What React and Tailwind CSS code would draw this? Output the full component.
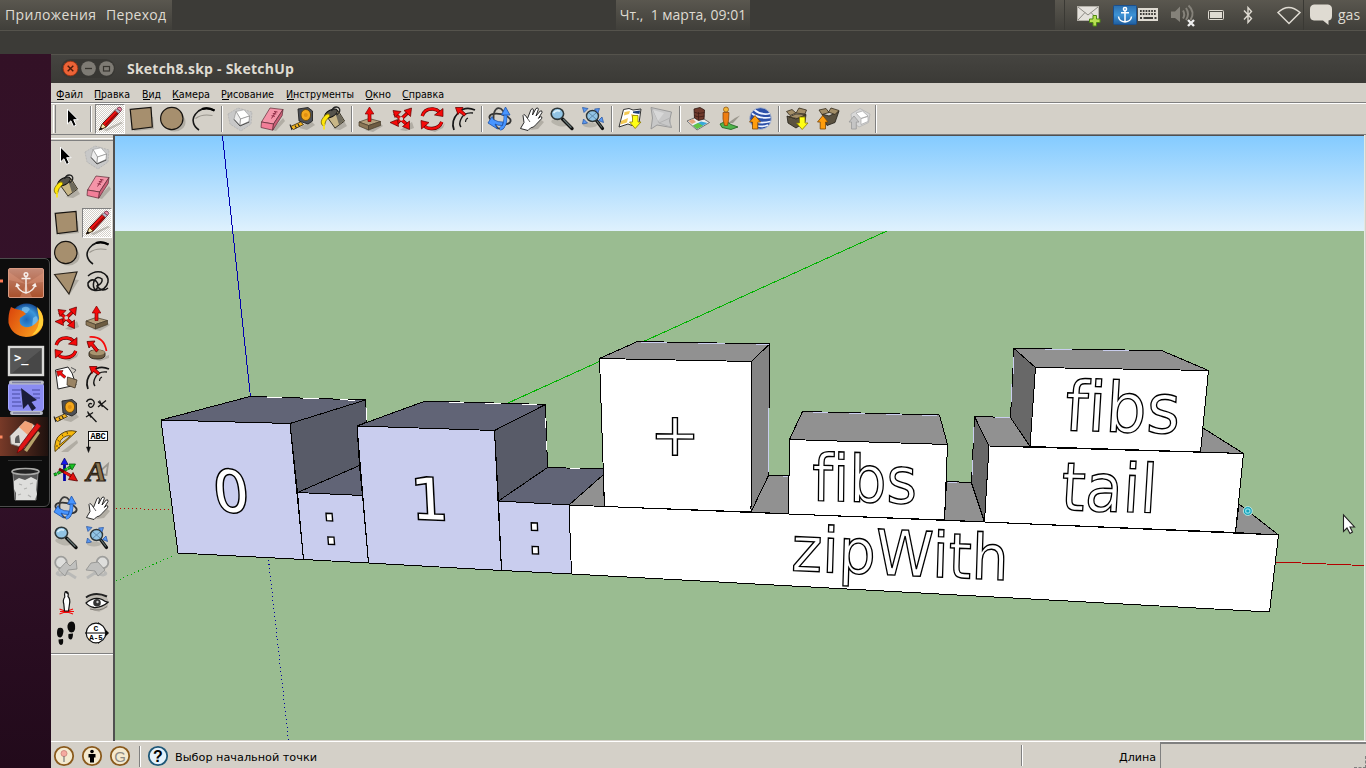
import React from "react";

const Shadow = ({ d }) => <path d={d} fill="#8d8980" opacity="0.5" />;

const ICONS = {
  select: (
    <path d="M9.5 5 V20 L12.900 16.800 L15.500 22.400 L18.200 21.200 L15.700 15.700 H20.100 Z" fill="#000" stroke="#fff" strokeWidth="1" />
  ),
  pencil: (
    <g>
      <Shadow d="M8 26 L26 18 L28 19 L12 27 Z" />
      <path d="M4.500 26 L7.500 19.500 L21 5.500 L24.500 8.500 L11 23 Z" fill="#ee1111" stroke="#3b0505" strokeWidth="0.9" />
      <path d="M10.500 21 L23 8" stroke="#9b0707" strokeWidth="1.500" />
      <path d="M4.500 26 L7.500 19.500 L11 23 Z" fill="#f4e3ae" stroke="#4a3b10" strokeWidth="0.8" />
      <path d="M4.300 26.300 L5.500 23 L8 25 Z" fill="#111" />
      <path d="M20 6.500 L22 4.500 L25.500 7.500 L23.500 9.500 Z" fill="#b7b7c8" stroke="#555" strokeWidth="0.6" />
      <path d="M22 4.500 Q24 2 26 3.700 Q27.500 5.500 25.500 7.500 Z" fill="#f08aa6" stroke="#6b2a3c" strokeWidth="0.8" />
    </g>
  ),
  rect: (
    <g>
      <Shadow d="M8 27 L28 25 L27 13 L10 13 Z" />
      <path d="M4.200 5.300 L25 3.500 L26.300 23 L6.200 25.500 Z" fill="#a68f6e" stroke="#161310" strokeWidth="1.2" />
    </g>
  ),
  circle: (
    <g>
      <ellipse cx="17.500" cy="18" rx="11" ry="9.500" fill="#8d8980" opacity="0.5" />
      <circle cx="14.800" cy="14.500" r="11.200" fill="#a68f6e" stroke="#161310" strokeWidth="1.2" />
    </g>
  ),
  polygon: (
    <g>
      <Shadow d="M10 10 L28 12 L19 26 Z" />
      <path d="M3.600 6.500 L26 4 L18 26 Z" fill="#a68f6e" stroke="#2a241c" strokeWidth="1.2" />
    </g>
  ),
  arc: (
    <g fill="none">
      <path d="M7.500 14.500 Q14 9.500 24.500 11.500" stroke="#9a968e" strokeWidth="1.1" />
      <path d="M26.500 6.500 Q18 1.500 10.500 7 Q3.500 13 5.500 19 Q6.500 23 11 26" stroke="#161616" strokeWidth="1.600" />
      <path d="M26.500 6.500 Q20 3 14 5" stroke="#000" strokeWidth="2.200" />
    </g>
  ),
  freehand: (
    <path d="M6 8 Q12 2.500 19 4 Q27 7 26 14 Q24 23 13 22.500 Q5 21 6 15 Q9 10 14 13 Q18 17 14 22 Q10 20 12 13 Q15 7 20 11 Q21 15 15 18 Q20 25 26 20" fill="none" stroke="#161616" strokeWidth="1.500" />
  ),
  component: (
    <g>
      <path d="M3 10 L13 4 L27 8 L26 20 L16 27 L5 20 Z" fill="#c8c8c8" stroke="#adadad" strokeWidth="0.7" strokeDasharray="2 1" />
      <path d="M11 7.500 L19 5.800 L24.500 12 L15.500 15 Z" fill="#fff" stroke="#999" strokeWidth="0.6" />
      <path d="M11 7.500 L15.500 15 L15 21.500 L9 15 Z" fill="#ededed" stroke="#888" strokeWidth="0.6" />
      <path d="M15.500 15 L24.500 12 L24 17.500 L15 21.500 Z" fill="#fdfdfd" stroke="#777" strokeWidth="0.6" />
      <path d="M9 15.500 L15 22 L24.300 18" stroke="#444" strokeWidth="0.9" fill="none" />
    </g>
  ),
  eraser: (
    <g>
      <Shadow d="M16 26 L27 14 L29 17 L20 27 Z" />
      <path d="M14 4 L27 5.500 L17.500 20 L5.500 18 Z" fill="#f594a8" stroke="#5c2935" strokeWidth="0.7" />
      <path d="M5.500 18 L17.500 20 L16.700 26.200 L5 23.500 Z" fill="#f27e98" stroke="#5c2935" strokeWidth="0.7" />
      <path d="M27 5.500 L26.200 11.500 L16.700 26.200 L17.500 20 Z" fill="#cc6078" stroke="#5c2935" strokeWidth="0.7" />
      <path d="M18 7.500 L21.500 8 M16.800 9.500 L20.300 10 M15.500 11.700 L19 12.300 M19.800 7.800 L15.500 14.500" stroke="#8f2d46" strokeWidth="1" />
    </g>
  ),
  tape: (
    <g>
      <Shadow d="M12 24 L24 17 L28 21 L20 26 Z" />
      <path d="M11 5 L21 3.500 L25.500 7 L25.500 17 L21 20 L12 17 Z" fill="#4c4f55" stroke="#222" strokeWidth="0.9" />
      <ellipse cx="18.800" cy="11" rx="4.800" ry="5.500" fill="#f4a81d" stroke="#5c4008" strokeWidth="0.8" />
      <circle cx="18.800" cy="11" r="2" fill="#e08f12" />
      <path d="M13.500 18 L16.500 20.500 L6.500 25.500 L3.500 22.500 Z" fill="#f6b51e" stroke="#33260a" strokeWidth="0.8" />
      <path d="M3 20.500 L5 26 M8 21.500 L9.500 24 M11 20 L12.500 22.500" stroke="#222" strokeWidth="1.1" />
    </g>
  ),
  bucket: (
    <g>
      <Shadow d="M15 25 L26 17 L29 22 L22 26 Z" />
      <path d="M7 10 L20 6.500 L26.500 17 L17 24 Z" fill="#c8b687" stroke="#26231a" strokeWidth="0.9" />
      <path d="M17 8 L22.500 11 L25.800 17 L21 20.500 Z" fill="#6e6a5c" />
      <ellipse cx="13" cy="9.500" rx="7" ry="3.400" fill="#55534c" stroke="#111" strokeWidth="0.9" transform="rotate(-28 13 9.500)" />
      <path d="M13.500 7 Q16 1.500 20.500 3.500 Q24 7 18.500 11" fill="none" stroke="#222" strokeWidth="1.3" />
      <path d="M8 10.500 Q2 16 3.500 20 Q4.500 22.500 6.500 21.500 Q6.500 17 12 12 Q11 8.500 8 10.500 Z" fill="#ffe60a" stroke="#766400" strokeWidth="0.8" />
      <path d="M6 20 V25.500" stroke="#ffe60a" strokeWidth="1.600" />
    </g>
  ),
  pushpull: (
    <g>
      <Shadow d="M10 26 L26 20 L28 22 L18 28 Z" />
      <path d="M4 18 L14 14.500 L25.500 17.500 L13.500 21.500 Z" fill="#b4a07c" stroke="#453b2a" strokeWidth="0.7" />
      <path d="M4 18 L13.500 21.500 L13.500 26 L4 22 Z" fill="#8c7757" stroke="#453b2a" strokeWidth="0.7" />
      <path d="M13.500 21.500 L25.500 17.500 L25.500 21.500 L13.500 26 Z" fill="#6d5c42" stroke="#453b2a" strokeWidth="0.7" />
      <path d="M14.500 3 L18.800 10 H16 V17.500 H13 V10 H10.200 Z" fill="#f50a0a" stroke="#7c0000" strokeWidth="0.7" />
    </g>
  ),
  move: (
    <g>
      <Shadow d="M14 26 L26 18 L28 24 L20 27 Z" />
      <path d="M8.500 9.500 L21.500 21 M22 8.500 L9.500 20.500" stroke="#5a0000" strokeWidth="3.600" />
      <path d="M8.500 9.500 L21.500 21 M22 8.500 L9.500 20.500" stroke="#f50a0a" strokeWidth="2.400" />
      <circle cx="15.300" cy="14.800" r="1.900" fill="#d4d0c8" />
      <path d="M7 6.500 L15 7.500 L9 13.500 Z M25.500 4 L24.500 12.500 L18 6.500 Z M23.500 25.500 L16.500 22.500 L23.500 17 Z M4 18.500 L11.500 15.500 L12.500 22.500 Z" fill="#f50a0a" stroke="#5a0000" strokeWidth="0.7" />
    </g>
  ),
  rotate: (
    <g fill="none">
      <Shadow d="M12 26 Q24 25 28 19 L26 24 L18 28 Z" />
      <path d="M5.200 12 Q7.500 4.500 16 5 Q20 5.300 22.500 8" stroke="#5a0000" strokeWidth="3.400" />
      <path d="M5.200 12 Q7.500 4.500 16 5 Q20 5.300 22.500 8" stroke="#f50a0a" strokeWidth="2.300" />
      <path d="M24.800 18 Q22 25 14 24.500 Q9.500 24.500 7.500 22" stroke="#5a0000" strokeWidth="3.400" />
      <path d="M24.800 18 Q22 25 14 24.500 Q9.500 24.500 7.500 22" stroke="#f50a0a" strokeWidth="2.300" />
      <path d="M26 4.500 L26 12.500 L17.500 11 Z M4.500 25 L4 16.500 L12 18.500 Z" fill="#f50a0a" stroke="#5a0000" strokeWidth="0.7" />
    </g>
  ),
  offset: (
    <g fill="none" stroke="#161616">
      <path d="M27 6 Q17 1.500 10 9 Q2.500 17 6 26" strokeWidth="1.700" />
      <path d="M25 9 Q16 8 13 15 Q10.500 20 13 23" strokeWidth="1.400" />
      <path d="M20 14 Q17.500 15 17.500 18" strokeWidth="1.100" />
      <path d="M7.500 3.500 L15 3.500 L13.500 6 L18 10 L16.300 12 L11.500 8.500 L10 10.500 Z" fill="#f50a0a" stroke="#6a0000" strokeWidth="0.8" />
    </g>
  ),
  followme: (
    <g>
      <Shadow d="M14 27 L27 22 L27 25 L18 28 Z" />
      <path d="M7 20 Q7 17 15 17 Q22.500 17 23 20 V22.500 Q22 26 15 26 Q8 26 7 22.500 Z" fill="#6d5c42" stroke="#2b2418" strokeWidth="0.9" />
      <ellipse cx="15.300" cy="19.500" rx="7.500" ry="2.800" fill="#a8946f" />
      <path d="M7.500 4 Q22 3 24.500 18" fill="none" stroke="#f50a0a" strokeWidth="1.700" />
      <path d="M5 8.500 L13 8 L11.300 10.500 L16.500 17 L14.300 19 L9 12.500 L7 15 Z" fill="#f50a0a" stroke="#5a0000" strokeWidth="0.8" />
    </g>
  ),
  scale: (
    <g>
      <path d="M4.500 7 L17 4 L21 10 L25 22 L7 26 Z" fill="#fff" stroke="#222" strokeWidth="1" />
      <path d="M16.500 14 L26 17 L24 25 L16 22 Z" fill="#9a8464" stroke="#3d3424" strokeWidth="0.8" />
      <path d="M5.500 8 L12 7.500 L10.800 10 L15 13.500 L13.200 15.300 L9 11.700 L7 13.500 Z" fill="#f50a0a" stroke="#5a0000" strokeWidth="0.6" />
      <path d="M20 4.500 L25 7 L22.500 10" fill="none" stroke="#555" strokeWidth="1" />
    </g>
  ),
  dimension: (
    <g fill="none" stroke="#161616" strokeWidth="1.300">
      <path d="M6 17 L14.500 26 M16 5.500 L26 14" />
      <path d="M4 21 L11 16.500 M5.500 15.500 L9 21.500 M16 11 L24 4.500 M17.500 4.500 L20.500 11" />
      <path d="M4.500 6 Q6 2.500 10 3.500 Q14 6 11 10 Q8 13 6.500 9.500 Q7 6.500 10 8" />
    </g>
  ),
  protractor: (
    <g>
      <Shadow d="M10 26 L26 14 L27 17 L17 26 Z" />
      <path d="M4 25.500 Q2.500 13 10 8 Q17 3 25.500 5.500 Z" fill="#f7b80c" stroke="#4a3608" strokeWidth="0.9" />
      <path d="M8.500 19 Q8.500 14 12.500 11.500 Q16 9 19.500 9.800 Z" fill="#d4d0c8" stroke="#4a3608" strokeWidth="0.8" />
      <path d="M5 20 H7 M6.500 14 L8.500 15.500 M11 8.500 L12 10.500 M16 6 L16.500 8 M7.500 21 L8.500 22.500" stroke="#4a3608" strokeWidth="0.8" />
    </g>
  ),
  label: (
    <g>
      <path d="M6.500 6 V25" stroke="#111" strokeWidth="1" />
      <path d="M4.500 21 H8.500 L6.500 26.500 Z" fill="#111" stroke="#111" strokeWidth="0.5" />
      <rect x="6.500" y="5.500" width="19" height="9" fill="#fff" stroke="#111" />
      <text x="16" y="13" fontSize="8.500" fontWeight="700" fontFamily="Liberation Mono, monospace" textAnchor="middle" textLength="15" fill="#000">ABC</text>
    </g>
  ),
  axes: (
    <g>
      <path d="M13.500 25 V9" stroke="#0000a8" strokeWidth="2.800" />
      <path d="M13.500 2 L17 8.500 H10 Z" fill="#1616ee" stroke="#00005c" strokeWidth="0.7" />
      <path d="M3 19 L20 11" stroke="#0a5c10" strokeWidth="3.200" strokeDasharray="3 0.8" />
      <path d="M3.500 18.800 L20 11" stroke="#18c322" strokeWidth="1.800" strokeDasharray="3 0.8" />
      <path d="M18 8 L24.500 8 L21 14 Z" fill="#18c322" stroke="#0a5c10" strokeWidth="0.8" />
      <path d="M8 13 L21 20.500" stroke="#6e0000" strokeWidth="3" />
      <path d="M13 16 L21 20.500" stroke="#e51111" strokeWidth="2.400" />
      <path d="M22 16.500 L26.500 25 L17.500 23.500 Z" fill="#e51111" stroke="#5c0000" strokeWidth="0.8" />
    </g>
  ),
  text3d: (
    <g>
      <path d="M16 17 L26 8 L24.500 19 L17 18" fill="none" stroke="#9b978f" strokeWidth="1.800" />
      <text x="13.500" y="25" fontSize="28" fontWeight="700" fontFamily="Liberation Serif, serif" textAnchor="middle" fill="#8d7752" stroke="#2c2214" strokeWidth="1.200" textLength="21" lengthAdjust="spacingAndGlyphs" transform="translate(3 0) skewX(-8)">A</text>
    </g>
  ),
  orbit: (
    <g fill="none">
      <ellipse cx="15" cy="15" rx="10.800" ry="5" stroke="#333" strokeWidth="1.800" transform="rotate(12 15 15)" />
      <ellipse cx="14.500" cy="14.500" rx="6" ry="10.500" stroke="#3c3c3c" strokeWidth="1.800" transform="rotate(-6 14.500 14.500)" />
      <path d="M15 25 Q21 23 20.500 10.500" stroke="#1c50a8" strokeWidth="3.600" />
      <path d="M15 25 Q21 23 20.500 10.500" stroke="#4895ff" strokeWidth="2.600" />
      <path d="M20.500 3 L25 11 L16.500 11 Z" fill="#4895ff" stroke="#1c50a8" strokeWidth="0.8" />
      <path d="M3 19 L7 12.500 L8.500 15.500 Q13 18.500 18 18 L17.500 21.500 Q12 21.500 10 20 L12.500 25 Z" fill="#4895ff" stroke="#1c50a8" strokeWidth="0.8" />
    </g>
  ),
  hand: (
    <g>
      <Shadow d="M14 26 L25 16 L28 18 L22 25 Z" />
      <path d="M4.500 24.500 L8 18.500 L7 11.500 Q7.500 9.500 9.500 11.500 L11.500 14.500 L15 5.500 Q17 3.500 17.500 6 L16.500 11 L20 4.500 Q22.200 3 22.400 5.200 L20 12 L24.200 7 Q26.300 6 26 8.500 L22.400 14.400 L24.500 12.700 Q26.800 12.400 25.500 14.800 L20 20.500 Q18 23.500 14.500 24 L12 26.500 Z" fill="#fff" stroke="#161616" strokeWidth="0.9" />
      <path d="M11.500 14.500 L14 18" stroke="#161616" strokeWidth="0.7" />
    </g>
  ),
  zoom: (
    <g>
      <ellipse cx="12" cy="19" rx="8" ry="3" fill="#8d8980" opacity="0.4" transform="rotate(15 12 19)" />
      <path d="M15.500 15 L25 24.500" stroke="#111" strokeWidth="3.400" strokeLinecap="round" />
      <path d="M16.500 15.500 L24 23.300" stroke="#607070" strokeWidth="1.300" strokeLinecap="round" />
      <ellipse cx="10.400" cy="9.800" rx="6.200" ry="5.600" fill="#92c4e4" stroke="#2d3638" strokeWidth="1.600" />
      <path d="M6.500 9 Q9 5.500 13 7.200" stroke="#d9effa" strokeWidth="1.800" fill="none" />
    </g>
  ),
  zoomext: (
    <g>
      <ellipse cx="12" cy="21" rx="7" ry="2.500" fill="#8d8980" opacity="0.4" />
      <path d="M18.500 16.500 L24.500 24.500" stroke="#111" strokeWidth="3.200" strokeLinecap="round" />
      <path d="M19 17 L24 23.500" stroke="#607070" strokeWidth="1.200" />
      <ellipse cx="14.500" cy="12" rx="6" ry="5.500" fill="#92c4e4" stroke="#2d3638" strokeWidth="1.400" />
      <path d="M11 9 L18 15 M18 9 L11 15" stroke="#5c87a8" strokeWidth="0.9" />
      <path d="M4.500 3.500 L10 4.500 L6 8.500 Z M21.500 4.500 L20 9 L16.500 5 Z M4.500 20 L5.500 15 L9.500 19 Z M25.500 18.500 L20.500 16.500 L24 13 Z" fill="#5a98f2" stroke="#214f9c" strokeWidth="0.7" />
    </g>
  ),
  zoomprev: (
    <g>
      <path d="M14 18 L25 25 M8 19 Q4 21 9 22 L18 20" stroke="#b9b9b7" strokeWidth="3" fill="none" />
      <circle cx="10" cy="9.500" r="5.800" fill="#dededc" stroke="#9d9d9b" strokeWidth="1.800" />
      <path d="M7.500 17 L15 9 L19 13 L25 7 L26 16 L17 17 L14 23 Z" fill="#c0c0be" stroke="#949492" strokeWidth="0.9" />
    </g>
  ),
  zoomnext: (
    <g transform="matrix(-1 0 0 1 30 0)">
      <path d="M14 18 L25 25 M8 19 Q4 21 9 22 L18 20" stroke="#b9b9b7" strokeWidth="3" fill="none" />
      <circle cx="9.500" cy="9.500" r="5.800" fill="#dededc" stroke="#9d9d9b" strokeWidth="1.800" />
      <path d="M7 17 L14 9 L21 10 L26 17 L17 18 L14 23 Z" fill="#c0c0be" stroke="#949492" strokeWidth="0.9" />
    </g>
  ),
  camera: (
    <g>
      <path d="M8.500 21 L22 26 M22 21 L8.500 26 M9 23.500 H23" stroke="#f50a0a" strokeWidth="1.200" />
      <path d="M13.800 9 Q13 4 15.300 3.500 Q18 4 17 8.500 Q19.500 11 18.500 16 L17.500 23 H13.500 L12.800 16 Q11.500 12 13.800 9 Z" fill="#fff" stroke="#111" strokeWidth="1.200" />
      <path d="M13.500 3.500 Q16.500 2 17.500 6.500 L15.500 5.500 Z" fill="#111" />
    </g>
  ),
  eye: (
    <g fill="none">
      <path d="M3.500 13 Q9 4 20 6 L26 11 L26 19 L17 24 L8 21 Z" fill="#a5a199" opacity="0.5" />
      <path d="M4 9.500 Q13 3 25 8.500" stroke="#222" strokeWidth="2" />
      <path d="M4 15 Q12 8 20 11.500 Q24 14.500 26.500 14 Q19 20 12 19.500 Q6 18 4 15 Z" fill="#fff" stroke="#111" strokeWidth="1.300" />
      <circle cx="15" cy="14.800" r="3.800" fill="#333" />
      <circle cx="15.500" cy="14" r="1.200" fill="#ccc" />
      <path d="M8 21 Q18 24 25 18.500" stroke="#76726b" strokeWidth="0.9" />
    </g>
  ),
  feet: (
    <g fill="#0b0b0b">
      <path d="M7.500 10 Q12 8.500 12.500 13 Q12 18.500 9.500 19.500 Q6 19.500 6 15 Q6 11 7.500 10 Z M7.500 21.500 L12 21 Q13 26.500 10 27 Q7.500 26.500 7.500 21.500 Z" />
      <path d="M18 4.500 Q22 2 23.800 6 Q25 11 22.500 14 Q18.500 15.500 17 11.500 Q15.500 7 18 4.500 Z M17.500 16 L22 15.500 Q22 21.500 19.500 21.500 Q16.500 21 17.500 16 Z" />
    </g>
  ),
  section: (
    <g>
      <path d="M16 4 L27 15 L16 26 Z" fill="#000" />
      <circle cx="14" cy="15" r="9.800" fill="#fff" stroke="#111" strokeWidth="1.200" />
      <path d="M3 15 H26" stroke="#111" strokeWidth="1.100" />
      <text x="14" y="13" fontSize="8" fontWeight="700" fontFamily="Liberation Mono, monospace" textAnchor="middle">C</text>
      <text x="14" y="21.500" fontSize="7.500" fontWeight="700" fontFamily="Liberation Mono, monospace" textAnchor="middle">A-5</text>
    </g>
  ),
  mapdown: (
    <g>
      <path d="M8.500 5.500 L14 4.500 L18 6 L26 5 L24 19 L17 21.500 L13 20 L4 23 Z" fill="#fff" stroke="#333" strokeWidth="1" />
      <path d="M9.500 8 L15 7 L14 10 L9 11.500 Z M6 17 L13 14 L12 18.500 L5.500 20.500 Z M16 10 L20 11 L17 14 Z" fill="#f3c955" />
      <path d="M18 7.500 L25 6.500 L24.500 10 L18 9 Z" fill="#1c3c78" />
      <path d="M17.500 11.500 H23 V18 H26 L20.200 24.500 L14.500 18 H17.500 Z" fill="#ffff14" stroke="#8a7a00" strokeWidth="0.8" />
    </g>
  ),
  terrain: (
    <g>
      <path d="M5 3.500 L25.500 8 L23.500 17 L25.500 23.500 L11 21 L5 25 L6.500 14 Z" fill="#c8c8c8" stroke="#949494" strokeWidth="0.9" />
      <path d="M6 4 L13 19 L24 14 L24.500 23 L13 19" fill="none" stroke="#b0b0b0" strokeWidth="0.9" />
      <path d="M7 6 L18 9 L12 17 Z" fill="#d8d8d8" />
    </g>
  ),
  photo: (
    <g>
      <path d="M4 17 L16 12 L26.500 18.500 L14 26 Z" fill="#eee" stroke="#555" strokeWidth="0.8" />
      <path d="M10 21.500 L18 17.500 L24.500 19 L14 25 Z" fill="#38a8d8" />
      <path d="M10 21.500 L15 19 L20 21.800 L14 25 Z" fill="#63c342" />
      <path d="M5.500 17 L10 15 L13 18 L9 20 Z" fill="#e5a378" />
      <path d="M11 5 L17 3.500 L21.500 6 L21 15 L15.500 16.500 L11.500 14 Z" fill="#703a2c" stroke="#2c1510" strokeWidth="0.8" />
      <path d="M15.500 8 V16 M11 8 L15.500 9.500 L21.500 8.500 M11 11.500 L15.500 13 L21.500 12" stroke="#3f1d15" strokeWidth="0.8" fill="none" />
    </g>
  ),
  pegman: (
    <g>
      <path d="M14 19 L21 14 L26 11.500 L19 19 Z" fill="#8d8980" opacity="0.8" />
      <path d="M6 20 L12 17 L17 20.500 L24 23 L17 25.500 L8 23.500 Z" fill="#50b44c" stroke="#1b5f1b" strokeWidth="0.8" />
      <circle cx="12" cy="5.500" r="2.500" fill="#f2b63a" stroke="#8b4c06" strokeWidth="0.7" />
      <path d="M9 8.500 H15 L14.500 16.500 L13.500 21.500 H10.500 L9 15 Z" fill="#ee7d12" stroke="#823e02" strokeWidth="0.7" />
    </g>
  ),
  globe: (
    <g fill="none">
      <circle cx="15.500" cy="14.500" r="10.800" fill="#2c50a8" stroke="#aeb8cc" strokeWidth="0.9" />
      <path d="M7 9.500 Q14 15 25.500 13.500 M9.500 6 Q16 11.500 25 9.500 M10 18 Q18 19.500 25.500 17.500 M13 22 Q18 23 23 21" stroke="#eef4ff" strokeWidth="1.700" />
      <path d="M10 11.500 L15.500 18 H12.800 V25 H7.500 V18 H4.500 Z" fill="#ff9d0c" stroke="#7c4500" strokeWidth="0.8" />
    </g>
  ),
  boxdown: (
    <g>
      <path d="M5 12 L14 15 L24 10.500 L23 18 L14 24 L6 19 Z" fill="#5b5240" stroke="#221e16" strokeWidth="0.8" />
      <path d="M4.500 7.500 L10 5.500 L14 9 L8 11.500 Z M14 9 L17 4 L24.500 6 L23 10 Z M7 13 L14 10 L24 10.500 L15 14.500 Z" fill="#a38e68" stroke="#342b1c" strokeWidth="0.8" />
      <path d="M17.500 13 H23 V19 H26 L20.200 25.500 L14.500 19 H17.500 Z" fill="#ffff14" stroke="#8a7a00" strokeWidth="0.8" />
    </g>
  ),
  boxup: (
    <g>
      <path d="M9 10 L16 12 L26 7 L22 18.500 L14 21.500 Z" fill="#5b5240" stroke="#221e16" strokeWidth="0.8" />
      <path d="M6 6 L13 4.500 L16 8.500 L9 10.500 Z M15.500 8 L18 4 L26 6.500 L22 10.500 Z" fill="#a38e68" stroke="#342b1c" strokeWidth="0.8" />
      <path d="M9.800 11.500 L15 18 H12.500 V25 H7.200 V18 H4.500 Z" fill="#ff9d0c" stroke="#7c4500" strokeWidth="0.8" />
    </g>
  ),
  houseup: (
    <g>
      <path d="M7 10 L16 4.500 L26 10 L24.500 18.500 L15 23 L8 18 Z" fill="#d8d8d8" stroke="#b4b4b4" strokeWidth="0.8" />
      <path d="M12 9 L18.500 7 L24 12 L17 14.500 Z M17 14.500 L24 12.500 V17.500 L17 20.500 Z" fill="#fff" stroke="#a4a4a4" strokeWidth="0.7" />
      <path d="M10 12 L15 18 H12.300 V25 H7.500 V18 H5 Z" fill="#c5c5c5" stroke="#999" strokeWidth="0.8" />
    </g>
  ),
};

const PRESSED = "bg-[repeating-conic-gradient(#ffffff_0_25%,#d4d0c8_0_50%)] bg-[length:2px_2px] border border-t-[#808080] border-l-[#808080] border-r-white border-b-white";

const Icon = ({ name }) => (
  <svg viewBox="0 0 30 30" className="block h-[30px] w-[30px] shrink-0">
    {ICONS[name]}
  </svg>
);

const Tool = ({ name, active }) => (
  <div className={"flex h-[30px] w-[30px] shrink-0 items-center justify-center overflow-hidden " + (active ? PRESSED : "")}>
    <Icon name={name} />
  </div>
);

const Sep = ({ wide }) => (
  <div className={"flex h-[26px] shrink-0 justify-center " + (wide ? "w-2" : "w-1.5")}>
    <div className="w-0.5 border-l border-l-[#808080] border-r border-r-white" />
  </div>
);

const GROUPS = [
  ["pencil", "rect", "circle", "arc"],
  ["component", "eraser", "tape", "bucket"],
  ["pushpull", "move", "rotate", "offset"],
  ["orbit", "hand", "zoom", "zoomext"],
  ["mapdown", "terrain"],
  ["photo", "pegman", "globe"],
  ["boxdown", "boxup", "houseup"],
];

const PALETTE = [
  { cls: "mb-1.5", items: ["select", "component", "bucket", "eraser"] },
  { cls: "mb-[5px]", items: ["rect", "pencil", "circle", "arc", "polygon", "freehand"] },
  { cls: "mb-[3px]", items: ["move", "pushpull", "rotate", "followme", "scale", "offset"] },
  { cls: "mb-[7px]", items: ["tape", "dimension", "protractor", "label", "axes", "text3d"] },
  { cls: "mb-[5px]", items: ["orbit", "hand", "zoom", "zoomext", "zoomprev", "zoomnext"] },
  { cls: "mb-[5px]", items: ["camera", "eye", "feet", "section"] },
];

const MENU = [
  { t: "Файл", w: "w-[38px]", len: 27 },
  { t: "Правка", w: "w-12", len: 36 },
  { t: "Вид", w: "w-[30px]", len: 19 },
  { t: "Камера", w: "w-[49px]", len: 38 },
  { t: "Рисование", w: "w-[65px]", len: 53 },
  { t: "Инструменты", w: "w-[79px]", len: 68 },
  { t: "Окно", w: "w-[37px]", len: 26 },
  { t: "Справка", w: "w-12", len: 42 },
];

const TopPanel = () => (
  <div className="flex h-[31px] shrink-0 border-b border-[#55534c] bg-[#3c3b37] font-['Open_Sans','Noto_Sans',sans-serif] text-[14px] leading-[30px] text-[#dfdbd2]">
    <div className="flex w-[172px] bg-linear-to-b from-[#5a574f] to-[#403f3a] pl-[5px]">
      <span className="w-[101px] tracking-[0.35px] whitespace-nowrap">Приложения</span>
      <span className="tracking-[0.3px]">Переход</span>
    </div>
    <div className="w-[444px]" />
    <div className="w-[134px] bg-linear-to-b from-[#5a574f] to-[#403f3a] text-center whitespace-pre">Чт.,  1 марта, 09:01</div>
    <div className="flex-1" />
    <div className="flex w-[311px] items-center bg-linear-to-b from-[#5a574f] to-[#403f3a]">
      <svg viewBox="1055 0 283 30" className="block h-[30px] w-[283px] shrink-0">
        <path d="M1064.5 0 V30 M1303.5 0 V30" stroke="#3a3934" />
        <rect x="1077.5" y="6.500" width="21" height="14" fill="#e4e1dc" stroke="#b3b0a8" />
        <path d="M1078 7 L1088 15 L1098 7 M1078 20 L1085 12.500 M1098 20 L1091 12.500" fill="none" stroke="#8c8983" />
        <path d="M1093 15.500 H1096.500 V19 H1100 V22.500 H1096.500 V26 H1093 V22.500 H1089.500 V19 H1093 Z" fill="#b8e052" stroke="#4e8a12" />
        <defs>
          <linearGradient id="anc" x1="0" y1="0" x2="0" y2="1"><stop offset="0" stopColor="#2c6fae" /><stop offset="0.5" stopColor="#3d93d6" /><stop offset="1" stopColor="#1f5d9e" /></linearGradient>
        </defs>
        <rect x="1113.5" y="5.500" width="23" height="19" rx="1" fill="url(#anc)" stroke="#1a4f8d" />
        <g fill="none" stroke="#fff" strokeWidth="1.500">
          <circle cx="1125" cy="9" r="1.600" />
          <path d="M1125 11 V22 M1121 12.800 H1129 M1118.500 16.500 Q1119 21.500 1125 22 Q1131 21.500 1131.500 16.500" />
        </g>
        <rect x="1138" y="8" width="20" height="13" fill="#dfdbd2" />
        <path d="M1140 11 H1156.500 M1140 14 H1156.500" stroke="#3c3b37" strokeWidth="2" strokeDasharray="1.700 1.100" />
        <path d="M1140 18 H1142 M1143.500 18 H1153 M1154.500 18 H1156.500" stroke="#3c3b37" strokeWidth="2" />
        <path d="M1171 11.500 H1175 L1180 6.500 V22 L1175 18 H1171 Z" fill="#85827a" />
        <path d="M1183 10.500 Q1185.500 14.500 1183 18.500 M1186 8 Q1190 14 1186 20 M1188.500 5.500 Q1195.500 12 1190.500 20" fill="none" stroke="#85827a" strokeWidth="2" />
        <path d="M1188 20 L1194 26 M1194 20 L1188 26" stroke="#eee" strokeWidth="2.400" />
        <rect x="1208.500" y="10.500" width="15" height="9" rx="1" fill="none" stroke="#dfdbd2" />
        <rect x="1210" y="12" width="12" height="6" fill="#dfdbd2" />
        <path d="M1244 10.500 L1251.500 18.500 L1248 22.500 V7.500 L1251.500 11.500 L1244 19.500" fill="none" stroke="#dfdbd2" strokeWidth="1.400" />
        <path d="M1278 12.500 Q1288.500 2.500 1300 12.500 L1289 23.500 Z" fill="none" stroke="#dfdbd2" strokeWidth="1.500" />
        <path d="M1314 4.500 H1328 Q1332 5 1332 9 V16 Q1332 20 1328.500 20.500 V25 L1323 20.500 H1314 Q1310 20 1310 16 V9 Q1310 5 1314 4.500 Z" fill="#dfdbd2" />
      </svg>
      <span>gas</span>
    </div>
  </div>
);

const Dock = () => (
  <div className="flex w-[51px] shrink-0 flex-col bg-linear-to-b from-[#331126] via-[#35122b] to-[#220a1b]">
    <div className="h-[204px]" />
    <svg viewBox="0 258 51 250" className="block h-[250px] w-[51px] shrink-0">
      <defs>
        <linearGradient id="tile" x1="0" y1="0" x2="0" y2="1"><stop offset="0" stopColor="#c48a77" /><stop offset="1" stopColor="#a9512c" /></linearGradient>
        <radialGradient id="fox"><stop offset="0" stopColor="#1c66b8" /><stop offset="0.6" stopColor="#3b98dc" /><stop offset="1" stopColor="#15488f" /></radialGradient>
        <linearGradient id="row" x1="0" x2="1"><stop offset="0" stopColor="#783a28" /><stop offset="1" stopColor="#1e110e" /></linearGradient>
        <linearGradient id="flame" x1="0" y1="0" x2="1" y2="0.5"><stop offset="0" stopColor="#d9420b" /><stop offset="1" stopColor="#f99c1c" /></linearGradient>
      </defs>
      <rect x="0" y="258" width="51" height="250" fill="#040404" />
      <path d="M0 258.500 H45 Q49.500 259 49.500 264 V501 Q49 506.500 44 506.500 H0" fill="#0d0d0d" stroke="#4c4c4c" />
      <path d="M0 281 H3" stroke="#ff7a55" strokeWidth="3" />
      <rect x="8.500" y="268.500" width="35" height="29" rx="1.500" fill="url(#tile)" stroke="#d89a82" />
      <path d="M26 284 L9 272 L9 280 Z M26 284 L20 297 L32 297 Z M26 284 L43 273 V282 Z" fill="#e09a80" opacity="0.4" />
      <g fill="none" stroke="#f6eeea" strokeWidth="1.500">
        <circle cx="26" cy="274.500" r="1.800" />
        <path d="M26 276 V293 M21.500 278.500 H30.500 M17 284.500 Q18 291 26 293 Q34 291 35 284.500 M16 287 L17 284 L19.500 286 M36 287 L35 284 L32.500 286" />
      </g>
      <circle cx="26.500" cy="319.500" r="16" fill="url(#fox)" />
      <path d="M22 308 Q27 305 30 309 L27 313 L22 313 Z M33 318 Q38 313 38 322 Q36 329 32 328 Z" fill="#83c4ef" opacity="0.7" />
      <path d="M11 307 Q14 309 20 310 Q24 311 26 314 L20 318 Q18 325 25 327 Q32 328 37 322 Q41 318 38 308 Q45 315 43 325 Q39 337 26 337 Q12 336 8.500 323 Q8 314 11 307 Z" fill="url(#flame)" />
      <path d="M37 307 Q44 313 43 324 Q40 333 32 335 Q40 327 39 318 Z" fill="#ffce36" />
      <rect x="9" y="347" width="34" height="28" fill="#474747" stroke="#d9d9d7" strokeWidth="2.400" />
      <path d="M11 374 V349 H42 Z" fill="#666" opacity="0.5" />
      <text x="14" y="362" fontSize="12" fontWeight="700" fill="#fff" fontFamily="DejaVu Sans Mono, monospace">&gt;_</text>
      <rect x="8.500" y="383" width="35" height="28" rx="3" fill="#8a8cf2" stroke="#a5a7ff" />
      <path d="M11 382.500 H42 M12 413 H41" stroke="#b9bbc8" strokeWidth="4" strokeLinecap="round" />
      <path d="M12 382.500 H41 M13 413 H40" stroke="#7d7fa0" strokeWidth="1.500" />
      <path d="M12 390 H21 M12 394 H20 M12 398 H20 M12 402 H21 M12 406 H22 M32 390 H40 M33 394 H40 M34 398 H40" stroke="#4648a0" />
      <path d="M21 388 L37 400 L31.500 402 L36 408 L32 411 L28 404 L23 409 Z" fill="#1b1d3a" />
      <rect x="0" y="417" width="48" height="39" fill="url(#row)" />
      <path d="M0 437 H2.500" stroke="#ff8a60" strokeWidth="3" />
      <path d="M10 436 L25 421 L38 427 L24 448 L11 444 Z" fill="#dedbd6" stroke="#777" strokeWidth="0.800" />
      <path d="M19 427 L25 421 L33 424 L30 437 Z" fill="#f3a278" />
      <path d="M15 440 Q15 436 19 435 L20 443 L15 443 Z" fill="#5a5a5a" />
      <path d="M24 450 L38 431 L40 433 L27 452 Z" fill="#b5a26a" />
      <path d="M17 453 L19 447 L37 423 L41 426 L22 450 Z" fill="#e01515" stroke="#670808" strokeWidth="0.800" />
      <path d="M8 460.500 H42" stroke="#343434" />
      <path d="M13 473 L15 500 H36 L38 473 Z" fill="#565656" stroke="#999" strokeWidth="0.800" />
      <path d="M14 481 L19 478 L25 480 L31 477 L37 480 L36 490 L37 494 L35 500 H16 L16 493 L14 489 Z" fill="#dededc" />
      <path d="M19 484 L22 485 M24 489 L27 488 M30 484 L33 483 M18 495 L21 494 M28 495 L31 497" stroke="#b0b0ae" fill="none" strokeWidth="1.300" />
      <ellipse cx="25.500" cy="471.500" rx="13.500" ry="3" fill="#222" stroke="#a9a9a7" strokeWidth="1.600" />
    </svg>
    <div className="flex-1" />
  </div>
);

const FaceText = ({ x, y, len, size, slope, lean, thick, children }) => (
  <text
    transform={`matrix(1 ${slope} ${lean} 1 ${x} ${y})`}
    className="[font-variant-ligatures:none]"
    fontFamily="DejaVu Sans, sans-serif"
    fontSize={size}
    textLength={len}
    lengthAdjust="spacingAndGlyphs"
    fill="#fff"
    stroke="#000"
    strokeWidth={thick ? 3 : 1.4}
    paintOrder={thick ? "stroke" : "normal"}
  >
    {children}
  </text>
);

const Viewport = () => (
  <svg viewBox="115 136 1249 604" className="block h-[604px] w-[1249px] shrink-0">
    <defs>
      <linearGradient id="sky" x1="0" y1="0" x2="0" y2="1"><stop offset="0" stopColor="#84cbff" /><stop offset="1" stopColor="#dff1fd" /></linearGradient>
    </defs>
    <rect x="115" y="136" width="1249" height="95" fill="url(#sky)" />
    <rect x="115" y="231" width="1249" height="509" fill="#9abc91" />
    <g shapeRendering="crispEdges" fill="none">
      <path d="M222.500 136 L250.500 397" stroke="#0000b0" />
      <path d="M268.500 560 L288.500 740" stroke="#0000a0" strokeDasharray="1 3" />
      <path d="M887 231 L508 403" stroke="#00b400" />
      <path d="M116 581 L178 553.500" stroke="#00a800" strokeDasharray="1 3" />
      <path d="M116 508.500 L172 509.500" stroke="#c00000" strokeDasharray="1 3" />
      <path d="M1276 562 L1364 565.500" stroke="#b40000" />
    </g>
    <g shapeRendering="crispEdges" stroke="#000" strokeWidth="1" strokeLinejoin="round">
      <g fill="#616476">
        <path d="M161 420 L250 396.500 L365.500 400 L290 423.500 Z" />
        <path d="M297.500 492.500 L359.500 465.500 L362.500 495.500 Z" />
      </g>
      <path d="M290 423.500 L365.500 400 L367 422 L357 426 L359.500 465.500 L297.500 492.500 Z" fill="#585b68" />
      <g fill="#c9cdee">
        <path d="M161 420 L290 423.500 L303.500 559.500 L178 553 Z" />
        <path d="M297.500 492.500 L362.500 495.500 L368.500 563 L303.500 559.500 Z" />
      </g>
      <path d="M357 426 L425.500 401 L545.500 404.500 L494.500 430.500 Z" fill="#616476" />
      <path d="M494.500 430.500 L545.500 404.500 L547.500 467.500 L498.500 501 Z" fill="#585b68" />
      <path d="M498.500 501 L547.500 467.500 L603 469 V475 L569 505 Z" fill="#616476" />
      <path d="M357 426 L494.500 430.500 L501.500 570.500 L368.500 563 Z" fill="#c9cdee" />
      <path d="M498.500 501 L569 505 L571.500 574 L501.500 570.500 Z" fill="#c9cdee" />
      <g fill="#919191">
        <path d="M569 505 L603 475 L604.500 506.500 Z" />
        <path d="M751 512 L768.500 475.500 H789.500 L788.500 514 Z" />
        <path d="M944.500 520 L946.500 481.500 L971.500 482.500 L984.500 522 Z" />
        <path d="M1235.500 532.500 L1239 504 L1278.500 535 Z" />
      </g>
      <path d="M569 505 L984.500 522 L1278.500 535 L1269.500 612 L571.500 574 Z" fill="#fff" />
      <path d="M599.500 358.500 L637.500 341.500 L769.500 344 L751.500 361.500 Z" fill="#919191" />
      <path d="M751.500 361.500 L769.500 344 L768.500 475.500 L751 512 Z" fill="#848484" />
      <path d="M599.500 358.500 L751.500 361.500 L751 512 L604.500 506.500 Z" fill="#fff" />
      <path d="M789.500 439.500 L802.500 411.500 L939.500 415 L947.500 444.500 Z" fill="#919191" />
      <path d="M789.500 439.500 L947.500 444.500 L944.500 520 L788.500 514 Z" fill="#fff" />
      <path d="M974.500 416.500 L1010.500 417.500 L1030 446.500 L989 446 Z" fill="#919191" />
      <path d="M1200.500 452 L1203 428 L1243.500 453.500 Z" fill="#919191" />
      <path d="M974.500 416.500 L989 446 L984.500 522 L971.500 483 Z" fill="#686868" />
      <path d="M989 446 L1243.500 453.500 L1235.500 532.500 L984.500 522 Z" fill="#fff" />
      <path d="M1014 348.500 L1161.500 350.500 L1208.500 370.500 L1035.500 367.500 Z" fill="#919191" />
      <path d="M1014 348.500 L1035.500 367.500 L1030 446.500 L1010.500 417.500 Z" fill="#686868" />
      <path d="M1035.500 367.500 L1208.500 370.500 L1200.500 452 L1030 446.500 Z" fill="#fff" />
    </g>
    <g shapeRendering="crispEdges" fill="none" stroke="#fff">
      <path d="M267 397.300 L282 397.700 M303 398.400 L319 398.900 M340 399.800 L355 400.200 M366.500 408 V420 M449 402.300 L464 402.700 M485 403.300 L501 403.800 M522 404.500 L537 405 M545.500 418 V428 M546.500 441 V450 M570 468.500 L580 468.800" />
      <path d="M641 342.500 L667 343 M698 343.500 L725 344 M756 344.600 L769 345 M768.500 408 V472 M813 412.500 L828 413 M849 413.500 L865 414 M886 414.500 L902 415 M922 415.500 L937 416" stroke="#c9cdee" />
      <path d="M1045 349.500 L1072 350 M1103 350.500 L1129 351 M1013.500 357 V374 M1011.500 384 V402 M973.500 427 V443 M972.500 460 V475 M995 417.500 H1010 M783 476.500 H788 M948 482 H957" stroke="#c9cdee" />
    </g>
    <FaceText x={215.500} y={511} len={35} size={57} slope={0.04} lean={0.09} thick>0</FaceText>
    <FaceText x={412} y={518.500} len={37} size={57} slope={0.04} lean={0.05} thick>1</FaceText>
    <FaceText x={321.500} y={544} len={20} size={60} slope={0.04} lean={0.08}>:</FaceText>
    <FaceText x={525.500} y={553.500} len={20} size={60} slope={0.04} lean={0.04}>:</FaceText>
    <FaceText x={650} y={455} len={50} size={60} slope={0.01} lean={0}>+</FaceText>
    <FaceText x={812} y={500.500} len={105} size={65} slope={0.03} lean={-0.01}>fibs</FaceText>
    <FaceText x={1064} y={430.500} len={115} size={69} slope={0.025} lean={-0.06}>fibs</FaceText>
    <FaceText x={1060} y={510} len={96} size={67} slope={0.03} lean={-0.06}>tail</FaceText>
    <FaceText x={791} y={570.500} len={217} size={62.500} slope={0.045} lean={-0.03}>zipWith</FaceText>
    <circle cx="1247.800" cy="511" r="4.500" fill="#19a5bd" stroke="#bde3dc" strokeWidth="1" />
    <circle cx="1247.800" cy="511" r="2.200" fill="none" stroke="#8fe0ea" strokeWidth="1.200" />
    <path d="M1343.500 515 V531.500 L1347 528 L1350 533.500 L1352.500 532 L1350 527 H1354.500 Z" fill="#fff" stroke="#222" strokeWidth="1.100" />
  </svg>
);

const StatusBar = () => (
  <div className="flex h-[27px] shrink-0 items-center border-t border-white bg-[#d4d0c8] font-['DejaVu_Sans',sans-serif] text-[11px] text-black">
    <svg viewBox="51 742 120 26" className="block h-[26px] w-[120px] shrink-0">
      <g fill="#f4ead0" stroke="#8a5a1c" strokeWidth="1.800">
        <circle cx="64" cy="756" r="9.200" /><circle cx="92" cy="756" r="9.200" /><circle cx="120" cy="756" r="9.200" />
      </g>
      <circle cx="64" cy="753.500" r="3" fill="#f5aaa0" stroke="#c98078" strokeWidth="0.800" />
      <path d="M64 756 V762" stroke="#777" strokeWidth="1.200" />
      <circle cx="92" cy="751.500" r="1.800" />
      <path d="M88.500 754 H95.500 V757.500 H94 V762.500 H90 V757.500 H88.500 Z" />
      <text x="120" y="761.500" fontSize="15" fontFamily="Liberation Sans, sans-serif" textAnchor="middle" fill="#8d8a84">G</text>
      <path d="M139.500 746 V767" stroke="#808080" /><path d="M140.500 746 V767" stroke="#fff" />
      <circle cx="158" cy="756" r="9.200" fill="#e4f1fb" stroke="#1f5878" strokeWidth="1.800" />
      <text x="158" y="762" fontSize="16" fontWeight="700" fontFamily="Liberation Sans, sans-serif" textAnchor="middle" fill="#000">?</text>
    </svg>
    <svg className="ml-1 block h-[26px] w-[846px] shrink-0">
      <text x="0" y="18.500" fontSize="11" textLength="142" lengthAdjust="spacingAndGlyphs">Выбор начальной точки</text>
    </svg>
    <div className="h-[21px] w-0.5 border-r border-l border-r-white border-l-[#808080]" />
    <svg className="ml-24 block h-[26px] w-[41px] shrink-0">
      <text x="0" y="18.500" fontSize="11" textLength="37" lengthAdjust="spacingAndGlyphs">Длина</text>
    </svg>
    <div className="flex flex-1 items-end justify-end self-stretch border-t-2 border-l border-[#808080]">
      <div className="h-3 w-3 border-r border-b border-dashed border-[#808080]" />
    </div>
  </div>
);

export default function App() {
  return (
    <div className="flex h-[768px] w-[1366px] flex-col overflow-hidden bg-[#3c3b37]">
      <TopPanel />
      <div className="h-[23px] shrink-0 bg-[#3c3b37]" />
      <div className="flex h-[714px]">
        <Dock />
        <div className="flex w-[1315px] flex-col bg-[#d4d0c8]">
          <div className="flex h-[29px] shrink-0 items-center border-t border-[#55534c] bg-linear-to-b from-[#454440] to-[#3b3a36]">
            <svg viewBox="51 55 68 28" className="block h-7 w-[68px] shrink-0">
              <rect x="61" y="59" width="54" height="19" rx="9.500" fill="#383733" />
              <circle cx="70.500" cy="68.500" r="7.300" fill="#ec6337" stroke="#9c3210" strokeWidth="0.800" />
              <path d="M67.700 65.700 L73.300 71.300 M73.300 65.700 L67.700 71.300" stroke="#4a1b0b" strokeWidth="1.400" />
              <circle cx="88.500" cy="68.500" r="7.300" fill="#7e7b74" /><circle cx="106.500" cy="68.500" r="7.300" fill="#7e7b74" />
              <path d="M85 68.500 H92" stroke="#37352f" strokeWidth="1.300" />
              <rect x="103.500" y="66.500" width="6" height="4.500" fill="none" stroke="#37352f" strokeWidth="1.200" />
            </svg>
            <span className="ml-2 pb-0.5 font-['Open_Sans','Noto_Sans',sans-serif] text-[14px] font-bold tracking-[0.23px] whitespace-nowrap text-[#dfdbd2]">Sketch8.skp - SketchUp</span>
          </div>
          <div className="flex h-5 shrink-0 border-b border-[#808080] pl-[5px]">
            {MENU.map((m) => (
              <div key={m.t} className={"h-[19px] " + m.w}>
                <svg className="block h-[19px] w-full overflow-visible">
                  <text x="0" y="15" fontSize="11" fontFamily="DejaVu Sans Condensed, DejaVu Sans, sans-serif" textLength={m.len} lengthAdjust="spacingAndGlyphs" fill="#000">{m.t}</text>
                  <path d="M0.500 16.500 H8" stroke="#000" shapeRendering="crispEdges" />
                </svg>
              </div>
            ))}
          </div>
          <div className="flex h-8 shrink-0 items-center border-t border-b border-t-white border-b-[#808080]">
            <div className="mx-0.5 h-7 w-[3px] border-r border-l border-r-[#808080] border-l-white" />
            <div className="flex w-[29px] justify-center"><Tool name="select" /></div>
            <Sep wide />
            {GROUPS.map((g, i) => (
              <React.Fragment key={i}>
                {i > 0 && <Sep />}
                <div className="flex gap-px pr-px">
                  {g.map((n) => <Tool key={n} name={n} active={n === "pencil"} />)}
                </div>
              </React.Fragment>
            ))}
            <div className="h-7 w-0.5 border-r border-l border-r-white border-l-[#808080]" />
          </div>
          <div className="flex h-[606px] shrink-0">
            <div className="flex w-16 shrink-0 flex-col border-r-2 border-[#505050]">
              <div className="mt-[3px] mb-px h-[3px] border-t border-b border-t-white border-b-[#808080]" />
              {PALETTE.map((g, i) => (
                <div key={i} className={"grid grid-cols-[30px_30px] gap-x-px " + g.cls}>
                  {g.items.map((n) => <Tool key={n} name={n} active={n === "pencil"} />)}
                </div>
              ))}
              <div className="h-0.5 border-t border-b border-t-[#808080] border-b-white" />
            </div>
            <div className="flex flex-col border-t border-[#505050]">
              <Viewport />
            </div>
            <div className="w-px bg-[#e8e6e0]" />
          </div>
          <StatusBar />
        </div>
      </div>
    </div>
  );
}
